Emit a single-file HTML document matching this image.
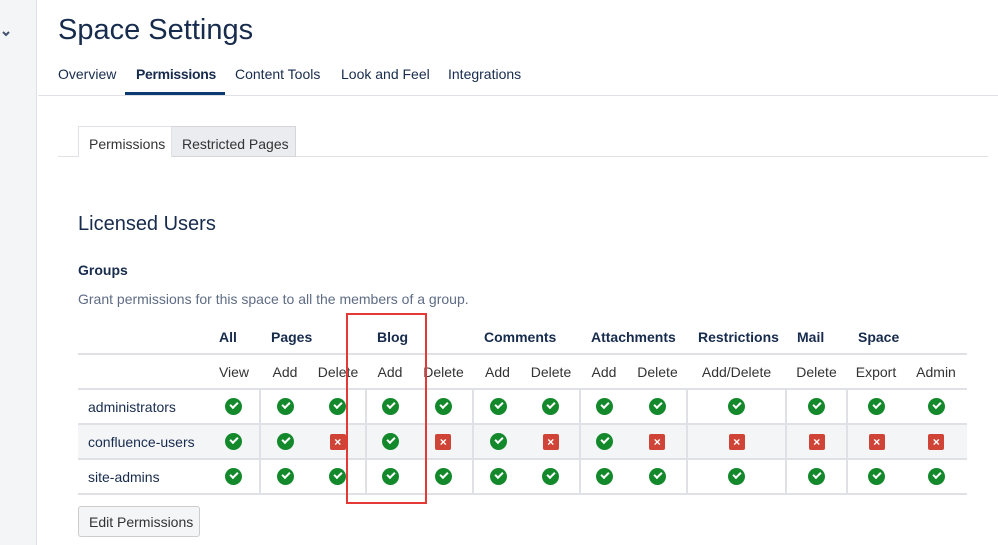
<!DOCTYPE html>
<html><head><meta charset="utf-8"><style>
*{margin:0;padding:0;box-sizing:border-box}
body{width:998px;height:545px;overflow:hidden;background:#fff;font-family:"Liberation Sans",sans-serif;color:#172b4d;position:relative}
.a{position:absolute;white-space:nowrap}
.side{position:absolute;left:0;top:0;width:37px;height:545px;background:#f4f5f7;border-right:1px solid #dfe1e6}
table{position:absolute;left:78px;top:320px;border-collapse:collapse;table-layout:fixed;font-size:14px}
td,th{padding:0;white-space:nowrap}
tr.h1 th{height:34px;text-align:left;padding-left:11px;font-weight:bold;font-size:14px;color:#172b4d}
tr.h2 td{height:35px;text-align:center;border-top:2px solid #dfe1e6;color:#333}
tr.r td{height:35px;text-align:center;border-top:2px solid #dfe1e6}
tr.r td.n{text-align:left;padding-left:10px;color:#172b4d}
tr.s td{background:#f4f5f7}
tr.last td{border-bottom:2px solid #dfe1e6}
.L{border-left:2px solid #dfe1e6}
.ok{display:inline-block;width:17px;height:17px;border-radius:50%;background:#14892c;vertical-align:middle;position:relative}
.ok:after{content:"";position:absolute;left:5px;top:4px;width:6px;height:3px;border-left:2px solid #fff;border-bottom:2px solid #fff;transform:rotate(-45deg)}
.no{display:inline-block;width:16px;height:16px;border-radius:2px;background:#d04437;vertical-align:middle;color:#fff;font-size:12px;font-weight:bold;line-height:16px;text-align:center}
</style></head><body>
<div class="side"></div>
<svg class="a" style="left:1px;top:30px" width="10" height="8" viewBox="0 0 10 8"><path d="M2 2 L5 5 L8 2" stroke="#42526e" stroke-width="2" fill="none"/></svg>
<div class="a" style="left:58px;top:14px;font-size:29px;color:#172b4d">Space Settings</div>
<div class="a" style="left:58px;top:66px;font-size:14px;color:#172b4d">Overview</div>
<div class="a" style="left:136px;top:66px;font-size:14px;font-weight:bold;color:#172b4d;letter-spacing:-0.3px">Permissions</div>
<div class="a" style="left:125px;top:92px;width:100px;height:3px;background:#0c3b74"></div>
<div class="a" style="left:235px;top:66px;font-size:14px">Content Tools</div>
<div class="a" style="left:341px;top:66px;font-size:14px">Look and Feel</div>
<div class="a" style="left:448px;top:66px;font-size:14px">Integrations</div>
<div class="a" style="left:38px;top:95px;width:960px;height:1px;background:#dfe1e6"></div>
<div class="a" style="left:58px;top:156px;width:930px;height:1px;background:#dfe1e6"></div>
<div class="a" style="left:78px;top:126px;width:94px;height:31px;background:#fff;border:1px solid #dfe1e6;border-bottom:none;font-size:14px;padding:9px 0 0 10px;color:#333">Permissions</div>
<div class="a" style="left:172px;top:126px;width:124px;height:31px;background:#ebecf0;border:1px solid #d5d6da;border-left:none;font-size:14px;padding:9px 0 0 10px;color:#333">Restricted Pages</div>
<div class="a" style="left:78px;top:213px;font-size:20px;color:#172b4d">Licensed Users</div>
<div class="a" style="left:78px;top:262px;font-size:14px;font-weight:bold">Groups</div>
<div class="a" style="left:78px;top:291px;font-size:14px;color:#5e6c84">Grant permissions for this space to all the members of a group.</div>
<table>
<colgroup><col style="width:130px"><col style="width:52px"><col style="width:50px"><col style="width:56px"><col style="width:48px"><col style="width:59px"><col style="width:49px"><col style="width:58px"><col style="width:48px"><col style="width:59px"><col style="width:99px"><col style="width:61px"><col style="width:58px"><col style="width:62px"></colgroup>
<tr class="h1"><th></th><th>All</th><th colspan="2">Pages</th><th colspan="2">Blog</th><th colspan="2">Comments</th><th colspan="2">Attachments</th><th>Restrictions</th><th>Mail</th><th colspan="2">Space</th></tr>
<tr class="h2"><td></td><td>View</td><td>Add</td><td>Delete</td><td>Add</td><td>Delete</td><td>Add</td><td>Delete</td><td>Add</td><td>Delete</td><td>Add/Delete</td><td>Delete</td><td>Export</td><td>Admin</td></tr>
<tr class="r"><td class="n">administrators</td><td><i class="ok"></i></td><td class="L"><i class="ok"></i></td><td><i class="ok"></i></td><td class="L"><i class="ok"></i></td><td><i class="ok"></i></td><td class="L"><i class="ok"></i></td><td><i class="ok"></i></td><td class="L"><i class="ok"></i></td><td><i class="ok"></i></td><td class="L"><i class="ok"></i></td><td class="L"><i class="ok"></i></td><td class="L"><i class="ok"></i></td><td><i class="ok"></i></td></tr>
<tr class="r s"><td class="n">confluence-users</td><td><i class="ok"></i></td><td class="L"><i class="ok"></i></td><td><i class="no">×</i></td><td class="L"><i class="ok"></i></td><td><i class="no">×</i></td><td class="L"><i class="ok"></i></td><td><i class="no">×</i></td><td class="L"><i class="ok"></i></td><td><i class="no">×</i></td><td class="L"><i class="no">×</i></td><td class="L"><i class="no">×</i></td><td class="L"><i class="no">×</i></td><td><i class="no">×</i></td></tr>
<tr class="r last"><td class="n">site-admins</td><td><i class="ok"></i></td><td class="L"><i class="ok"></i></td><td><i class="ok"></i></td><td class="L"><i class="ok"></i></td><td><i class="ok"></i></td><td class="L"><i class="ok"></i></td><td><i class="ok"></i></td><td class="L"><i class="ok"></i></td><td><i class="ok"></i></td><td class="L"><i class="ok"></i></td><td class="L"><i class="ok"></i></td><td class="L"><i class="ok"></i></td><td><i class="ok"></i></td></tr>
</table>
<div class="a" style="left:346px;top:313px;width:81px;height:191px;border:2px solid #e53935"></div>
<div class="a" style="left:78px;top:506px;width:122px;height:31px;background:#f4f5f7;border:1px solid #ccc;border-radius:3px;font-size:14px;padding:7px 0 0 10px;color:#333">Edit Permissions</div>
</body></html>
